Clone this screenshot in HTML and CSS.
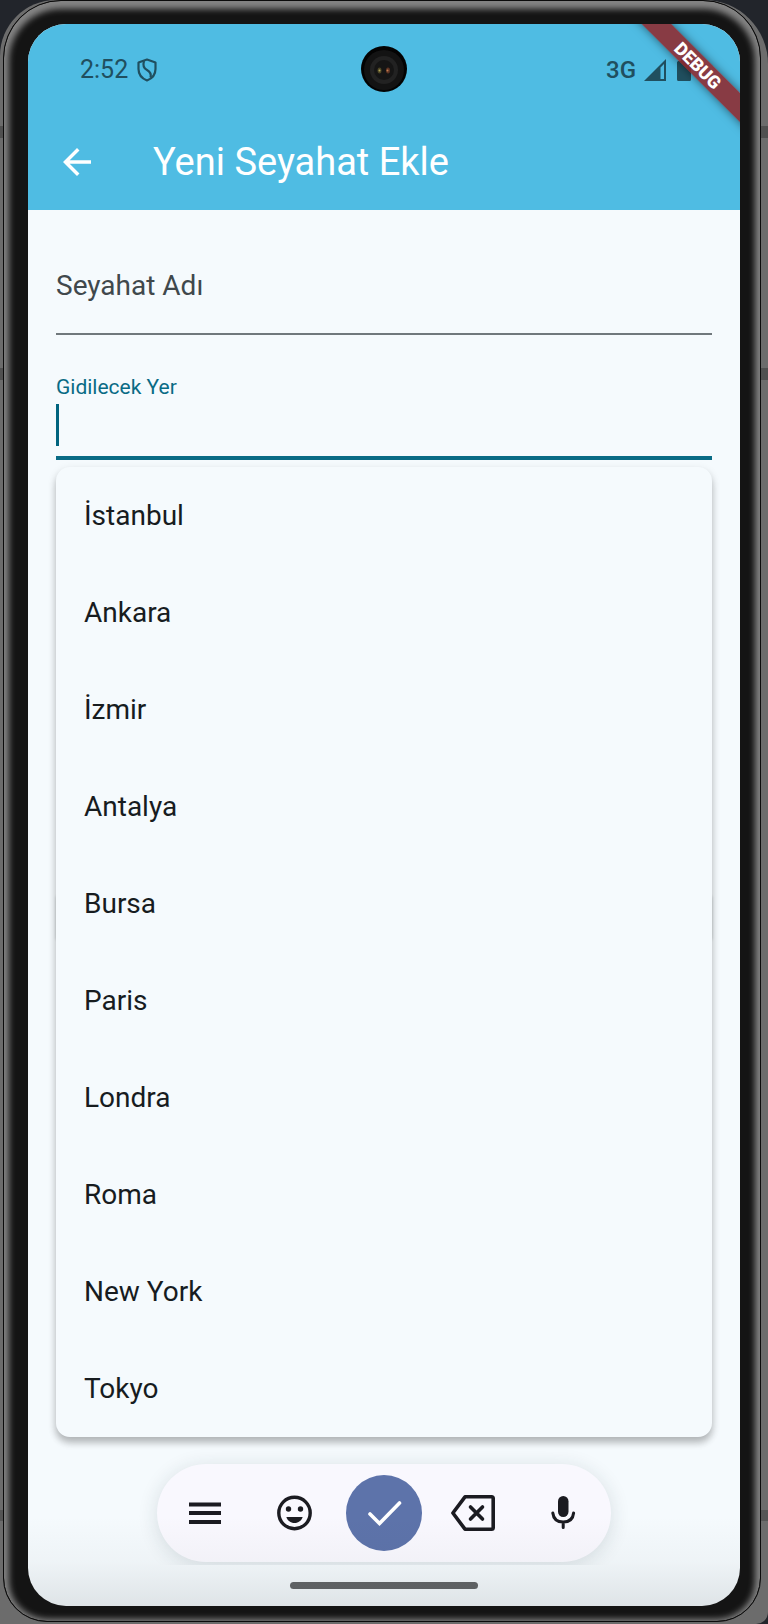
FILE: index.html
```html
<!DOCTYPE html>
<html lang="tr">
<head>
<meta charset="utf-8">
<meta name="viewport" content="width=device-width, initial-scale=1">
<title>Yeni Seyahat Ekle</title>
<link rel="stylesheet" href="styles.css">
</head>
<body>
<div class="device">
  <div class="bezel">
    <div class="screen">
      <header class="header">
        <div class="status-bar">
          <div class="status-group">
            <span>2:52</span>
            <svg class="shield" viewBox="0 0 20 24" fill="none" stroke="currentColor" stroke-width="2.2" stroke-linejoin="round" aria-hidden="true">
              <path d="M10 1.500 18.500 4.500V11C18.500 16.500 15 20.500 10 22.500 5 20.500 1.500 16.500 1.500 11V4.500Z"/>
              <path d="M7 3C5.500 8 7 10.500 10 12 13.500 14 14.500 16 13.500 19.500"/>
            </svg>
          </div>
          <div class="status-group status-right">
            <span class="network">3G</span>
            <svg class="signal" viewBox="0 0 22 22" aria-hidden="true">
              <path fill="currentColor" fill-rule="evenodd" d="M0 22 22 0V22ZM16.500 8.500V20H20V5Z"/>
            </svg>
            <svg class="battery" viewBox="0 0 14 22" aria-hidden="true">
              <path fill="currentColor" d="M4 0H10V2H12.500Q14 2 14 3.500V20.500Q14 22 12.500 22H1.500Q0 22 0 20.500V3.500Q0 2 1.500 2H4Z"/>
            </svg>
          </div>
          <svg class="camera" viewBox="0 0 46 46" aria-hidden="true">
            <circle cx="23" cy="23" r="23" fill="#030303"/>
            <circle cx="23" cy="24" r="20" fill="#131313"/>
            <circle cx="23" cy="24" r="14" fill="#222"/>
            <circle cx="23" cy="24" r="10" fill="#151515"/>
            <ellipse cx="18.500" cy="24.500" rx="2" ry="3" fill="#4b4525"/>
            <circle cx="18.500" cy="24.500" r="1" fill="#b6a958"/>
            <ellipse cx="27" cy="24.500" rx="2" ry="3" fill="#5d3323"/>
            <circle cx="26.500" cy="24.500" r="1" fill="#c47d51"/>
          </svg>
        </div>
        <div class="app-bar">
          <button class="back" type="button" aria-label="Geri">
            <svg viewBox="0 0 24 24" aria-hidden="true"><path fill="currentColor" d="M20 11H7.830l5.590-5.590L12 4l-8 8 8 8 1.410-1.410L7.830 13H20v-2z"/></svg>
          </button>
          <h1 class="title">Yeni Seyahat Ekle</h1>
        </div>
        <div class="debug-banner">DEBUG</div>
      </header>

      <main class="form">
        <div class="field">
          <label class="placeholder-label" for="trip-name">Seyahat Adı</label>
          <input class="input" id="trip-name" type="text">
        </div>
        <div class="field focused">
          <label class="float-label" for="destination">Gidilecek Yer</label>
          <input class="input" id="destination" type="text" autocomplete="off">
        </div>
        <div class="options-area">
          <ul class="options">
            <li><button class="option" type="button">İstanbul</button></li>
            <li><button class="option" type="button">Ankara</button></li>
            <li><button class="option" type="button">İzmir</button></li>
            <li><button class="option" type="button">Antalya</button></li>
            <li><button class="option" type="button">Bursa</button></li>
            <li><button class="option" type="button">Paris</button></li>
            <li><button class="option" type="button">Londra</button></li>
            <li><button class="option" type="button">Roma</button></li>
            <li><button class="option" type="button">New York</button></li>
            <li><button class="option" type="button">Tokyo</button></li>
          </ul>
        </div>
      </main>

      <footer class="bottom">
        <div class="toolbar-area">
          <div class="toolbar">
            <button class="tool" type="button" aria-label="Menü">
              <svg viewBox="0 0 46 46" aria-hidden="true"><path d="M7 14.500H39M7 23H39M7 32H39" stroke="currentColor" stroke-width="3.800"/></svg>
            </button>
            <button class="tool" type="button" aria-label="Emoji">
              <svg viewBox="0 0 46 46" aria-hidden="true">
                <circle cx="23.500" cy="23" r="15.700" fill="none" stroke="currentColor" stroke-width="3.400"/>
                <circle cx="17.500" cy="19" r="2.700" fill="currentColor"/><circle cx="29.500" cy="19" r="2.700" fill="currentColor"/>
                <path fill="currentColor" d="M15.300 27H31.700C30.500 30.500 27.500 33 23.500 33S16.500 30.500 15.300 27Z"/>
              </svg>
            </button>
            <button class="tool" type="button" aria-label="Tamam">
              <span class="confirm">
                <svg viewBox="0 0 46 46" fill="none" stroke="currentColor" stroke-width="3.600" stroke-linecap="round" stroke-linejoin="miter" aria-hidden="true"><path d="M9 24 18.500 33.500 38.500 13"/></svg>
              </span>
            </button>
            <button class="tool" type="button" aria-label="Sil">
              <svg viewBox="0 0 46 46" fill="none" stroke="currentColor" stroke-width="3.600" stroke-linecap="round" stroke-linejoin="round" aria-hidden="true">
                <path d="M14 6.800H40.500Q42.200 6.800 42.200 8.500V37.500Q42.200 39.200 40.500 39.200H14L1.900 23Z"/><path d="M19.500 17 31.500 29M31.500 17 19.500 29"/>
              </svg>
            </button>
            <button class="tool" type="button" aria-label="Sesli giriş">
              <svg viewBox="0 0 46 46" aria-hidden="true">
                <rect x="18" y="6" width="10.500" height="21" rx="5.200" fill="currentColor"/>
                <path d="M12.800 23C13.500 29 17.500 32 23.200 32S33 29 33.600 23M23.200 32V37.500" fill="none" stroke="currentColor" stroke-width="3" stroke-linecap="round"/>
              </svg>
            </button>
          </div>
        </div>
        <div class="nav"><div class="handle"></div></div>
      </footer>
    </div>
  </div>
</div>
</body>
</html>
```

FILE: styles.css
```css
* {
  box-sizing: border-box;
}

body {
  margin: 0;
  background: #22252b;
  font-family: Roboto, "Noto Sans", sans-serif;
}

button {
  border: 0;
  padding: 0;
  background: none;
  color: inherit;
  font: inherit;
}

svg {
  display: block;
}

.device {
  min-height: 100vh;
  display: flex;
  padding: 0 7px 2px 3px;
  border-radius: 56px 64px 12px 0;
  background: linear-gradient(
    #6c6c6c 126px, #505050 126px, #505050 138px,
    #6c6c6c 138px, #6c6c6c 368px, #505050 368px, #505050 380px,
    #6c6c6c 380px, #6c6c6c calc(100% - 114px),
    #555 calc(100% - 114px), #555 calc(100% - 103px),
    #6c6c6c calc(100% - 103px)
  );
}

.bezel {
  flex: 1;
  display: flex;
  padding: 23px 20px 15px 24px;
  border: 1px solid #0b0b0b;
  border-radius: 58px 58px 44px 44px;
  background: #141414;
  box-shadow: inset 0 3px 6px 5px #858585;
}

.screen {
  flex: 1;
  display: flex;
  flex-direction: column;
  overflow: hidden;
  border-radius: 38px;
  background: #f5fafd;
}

.header {
  position: relative;
  background: #4fbce3;
}

.status-bar {
  position: relative;
  display: flex;
  align-items: center;
  justify-content: space-between;
  height: 89px;
  padding: 2px 49px 0 52px;
  color: #204f5f;
  font-size: 25px;
}

.status-group {
  display: flex;
  align-items: center;
  gap: 9px;
}

.network {
  font-size: 24px;
  font-weight: 500;
}

.shield {
  width: 20px;
  height: 24px;
}

.signal {
  width: 22px;
  height: 22px;
}

.battery {
  width: 14px;
  height: 22px;
  margin-left: 3px;
}

.status-right {
  gap: 8px;
}

.camera {
  position: absolute;
  top: 22px;
  left: calc(50% - 23px);
  width: 46px;
  height: 46px;
}

.app-bar {
  display: flex;
  align-items: center;
  gap: 55px;
  height: 97px;
  padding: 0 28px;
  color: #fff;
}

.back svg {
  width: 42px;
  height: 42px;
}

.title {
  margin: 0;
  font-size: 38px;
  font-weight: 400;
  line-height: 48px;
}

.debug-banner {
  position: absolute;
  top: 31px;
  right: -38px;
  width: 160px;
  background: rgba(146, 37, 40, 0.85);
  box-shadow: 0 0 10px rgba(0, 0, 0, 0.5);
  color: #fff;
  font-size: 18px;
  font-weight: 900;
  line-height: 21px;
  text-align: center;
  transform: rotate(45deg);
}

.form {
  flex: 1;
  display: flex;
  flex-direction: column;
  padding: 28px;
}

.field {
  display: grid;
  height: 97px;
  margin-bottom: 28px;
  border-bottom: 2px solid #70787c;
}

.input {
  width: 100%;
  padding: 0;
  border: 0;
  outline: 0;
  background: none;
  color: #171c1f;
  font: inherit;
  font-size: 28px;
}

.placeholder-label,
.field:not(.focused) .input {
  grid-area: 1 / 1;
}

.placeholder-label {
  align-self: center;
  color: #40484c;
  font-size: 28px;
  line-height: 42px;
}

.focused {
  grid-template-rows: 27px 42px;
  align-content: end;
  margin-bottom: 7px;
  padding-bottom: 10px;
  border-bottom: 4px solid #096b85;
}

.float-label {
  color: #096b85;
  font-size: 21px;
  line-height: 21px;
}

.focused .input {
  background: linear-gradient(#00647f, #00647f) left / 3px 100% no-repeat;
  caret-color: transparent;
}

.options-area {
  position: relative;
  z-index: 0;
}

.options-area::before {
  content: "";
  position: absolute;
  z-index: -1;
  top: 427px;
  left: 0;
  right: 0;
  height: 46px;
  border-radius: 4px;
  box-shadow: 0 1px 3px rgba(0, 0, 0, 0.2);
}

.options {
  margin: 0;
  padding: 0;
  list-style: none;
  border-radius: 14px;
  background: #f5fafd;
  box-shadow: 0 6px 7px rgba(0, 0, 0, 0.2), 0 3px 10px rgba(0, 0, 0, 0.12);
}

.option {
  display: block;
  width: 100%;
  height: 97px;
  padding: 0 28px;
  color: #171c1f;
  font-size: 28px;
  text-align: left;
}

.bottom {
  position: relative;
}

.bottom::after {
  content: "";
  position: absolute;
  inset: auto 0 0;
  height: 90px;
  background: linear-gradient(rgba(40, 50, 55, 0), rgba(40, 50, 55, 0.03) 50%, rgba(40, 50, 55, 0.11));
  pointer-events: none;
}

.toolbar-area {
  display: flex;
  justify-content: center;
  overflow: hidden;
  margin-top: -28px;
  padding: 27px 28px 3px;
}

.toolbar {
  display: grid;
  grid-template-columns: repeat(5, 1fr);
  width: 100%;
  max-width: 454px;
  height: 98px;
  padding: 0 3px;
  border-radius: 49px;
  background: #f9f8fe;
  box-shadow: 0 3px 20px rgba(30, 50, 55, 0.14);
  color: #1b1b21;
}

.tool {
  display: grid;
  place-items: center;
}

.tool svg {
  width: 46px;
  height: 46px;
}

.confirm {
  display: grid;
  place-items: center;
  width: 76px;
  height: 76px;
  border-radius: 50%;
  background: #5d73aa;
  color: #fff;
}

.nav {
  display: flex;
  justify-content: center;
  padding: 17px 0;
}

.handle {
  width: 188px;
  height: 7px;
  border-radius: 4px;
  background: #626567;
}
```
